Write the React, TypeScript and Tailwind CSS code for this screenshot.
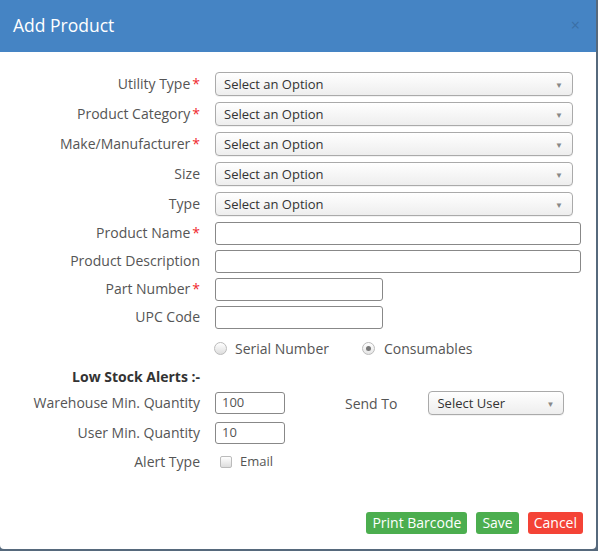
import React from 'react';

const font = { fontFamily: '"Open Sans", "Liberation Sans", sans-serif' };

function Label({ text, req, bold }: { text: string; req?: boolean; bold?: boolean }) {
  return (
    <div className={`w-[200px] shrink-0 text-right leading-[20px] text-[14px] ${bold ? 'font-bold text-[#333]' : 'text-[#555]'}`}>
      {text}
      {req && <span className="text-[#f0282d] ml-[2px]">*</span>}
    </div>
  );
}

function Select({ label, w }: { label: string; w: string }) {
  return (
    <div
      className={`${w} h-[24px] flex items-center justify-between pl-[8px] pr-[9px] pt-[1px] rounded-[4px] border border-[#aaa] bg-gradient-to-b from-white via-[#f6f6f6] to-[#eee] text-[13px] text-[#333] shadow-[0_1px_0_rgba(0,0,0,0.05)]`}
    >
      <span>{label}</span>
      <span className="text-[8px] text-[#888]">▼</span>
    </div>
  );
}

function Input({ w, value, h = 'h-[23px]' }: { w: string; value?: string; h?: string }) {
  return (
    <div className={`${w} ${h} flex items-center px-[6px] rounded-[3px] border border-[#888] bg-white text-[13px] text-[#555]`}>
      {value}
    </div>
  );
}

export default function App() {
  const selects = [
    { label: 'Utility Type', req: true },
    { label: 'Product Category', req: true },
    { label: 'Make/Manufacturer', req: true },
    { label: 'Size' },
    { label: 'Type' },
  ];
  const inputs = [
    { label: 'Product Name', req: true, w: 'w-[366px]' },
    { label: 'Product Description', w: 'w-[366px]' },
    { label: 'Part Number', req: true, w: 'w-[168px]' },
    { label: 'UPC Code', w: 'w-[168px]' },
  ];

  return (
    <div className="w-[598px] h-[551px] bg-[#56697c] overflow-hidden" style={font}>
      <div className="w-[596px] h-[549px] bg-white rounded-b-[4px] flex flex-col">
        <div className="h-[52px] bg-[#4584c4] flex items-center justify-between pl-[13px] pr-[16px] pb-[2px]">
          <span className="text-white text-[17.5px]">Add Product</span>
          <span className="text-[#3a6fa6] text-[16px] leading-none">×</span>
        </div>

        <div className="pt-[17px] flex flex-col">
          {selects.map((s) => (
            <div key={s.label} className="h-[30px] flex items-center">
              <Label text={s.label} req={s.req} />
              <div className="ml-[15px]">
                <Select label="Select an Option" w="w-[358px]" />
              </div>
            </div>
          ))}

          {inputs.map((s) => (
            <div key={s.label} className="h-[28px] flex items-center">
              <Label text={s.label} req={s.req} />
              <div className="ml-[15px]">
                <Input w={s.w} />
              </div>
            </div>
          ))}

          <div className="h-[34px] flex items-center pl-[214px] text-[14px] text-[#555]">
            <span className="w-[13px] h-[13px] rounded-full border border-[#bbb] bg-gradient-to-b from-white to-[#ddd]" />
            <span className="ml-[8px]">Serial Number</span>
            <span className="ml-[33px] w-[13px] h-[13px] rounded-full border border-[#bbb] bg-gradient-to-b from-white to-[#e5e5e5] flex items-center justify-center">
              <span className="w-[5px] h-[5px] rounded-full bg-[#777]" />
            </span>
            <span className="ml-[9px]">Consumables</span>
          </div>

          <div className="h-[24px] flex items-center">
            <Label text="Low Stock Alerts :-" bold />
          </div>

          <div className="h-[28px] flex items-center">
            <Label text="Warehouse Min. Quantity" />
            <div className="ml-[15px]">
              <Input w="w-[70px]" h="h-[22px]" value="100" />
            </div>
            <span className="ml-[60px] text-[14px] text-[#555]">Send To</span>
            <div className="ml-[31px]">
              <Select label="Select User" w="w-[136px]" />
            </div>
          </div>

          <div className="h-[32px] flex items-center">
            <Label text="User Min. Quantity" />
            <div className="ml-[15px]">
              <Input w="w-[70px]" h="h-[22px]" value="10" />
            </div>
          </div>

          <div className="h-[26px] flex items-center">
            <Label text="Alert Type" />
            <span className="ml-[20px] w-[12px] h-[12px] rounded-[2px] border border-[#bbb] bg-gradient-to-b from-white to-[#ddd]" />
            <span className="ml-[8px] text-[13px] text-[#555]">Email</span>
          </div>
        </div>

        <div className="mt-[37px] flex justify-end gap-[9px] pr-[13px]">
          <button className="h-[22px] px-[6px] rounded-[3px] bg-[#4cae4f] text-white text-[14px] leading-none">Print Barcode</button>
          <button className="h-[22px] px-[6px] rounded-[3px] bg-[#4cae4f] text-white text-[14px] leading-none">Save</button>
          <button className="h-[22px] px-[6px] rounded-[3px] bg-[#f44336] text-white text-[14px] leading-none">Cancel</button>
        </div>
      </div>
    </div>
  );
}
